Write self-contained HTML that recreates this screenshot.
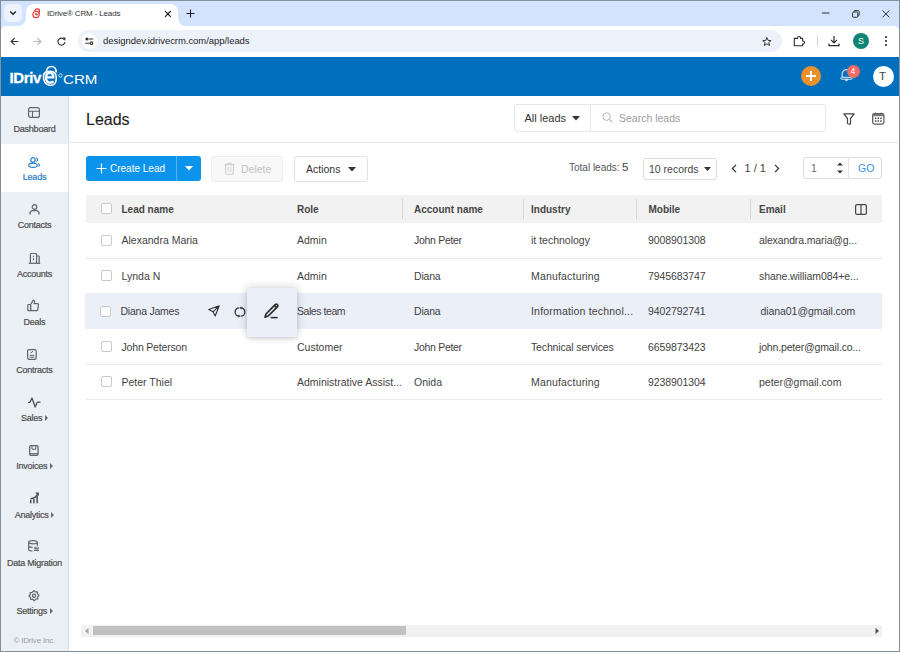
<!DOCTYPE html>
<html><head><meta charset="utf-8">
<style>
*{box-sizing:border-box;margin:0;padding:0}
html,body{width:900px;height:652px;overflow:hidden;background:#fff;font-family:"Liberation Sans",sans-serif;position:relative}
.a{position:absolute}
.t{position:absolute;white-space:nowrap;line-height:1}
svg{position:absolute;overflow:visible}
#frame{position:absolute;left:0;top:0;width:900px;height:652px;border:1px solid #80919c;z-index:50;pointer-events:none}
/* chrome */
#tabstrip{left:1px;top:1px;width:898px;height:30px;background:#d3e3fd}
#tabdd{left:4px;top:4px;width:18px;height:18px;border-radius:5px;background:#edf2fd}
#tab{left:26px;top:4px;width:152px;height:24px;background:#fff;border-radius:8px 8px 0 0}
#toolbar{left:1px;top:26px;width:898px;height:31px;background:#fff;border-radius:5px 5px 0 0}
#omni{left:78px;top:30px;width:704px;height:22px;border-radius:11px;background:#edf2fa}
#appbar{left:1px;top:57px;width:898px;height:39px;background:#0070be}
#side{left:1px;top:96px;width:68px;height:555px;background:#ebf0f5;border-right:1px solid #dbe2ea}
.si{position:absolute;left:0;width:67px;height:48px;color:#4d4d4d}
.si .lb{position:absolute;left:0;width:67px;text-align:center;top:29px;font-size:9px;letter-spacing:-0.25px;white-space:nowrap;line-height:1;-webkit-text-stroke:0.2px currentColor}
.car{display:inline-block;width:0;height:0;border-left:3px solid #6a6a6a;border-top:3px solid transparent;border-bottom:3px solid transparent;margin-left:2.5px;vertical-align:0px}
.tb{font-size:10.5px;color:#3f3f3f}
.th{font-size:10px;color:#454545;font-weight:bold}
.cb{position:absolute;width:11px;height:11px;border:1px solid #c9c9c9;border-radius:2px;background:#fff}
.rowline{position:absolute;left:86px;width:796px;height:1px;background:#e9e9e9}
.vd{position:absolute;top:199px;width:1px;height:20px;background:#d6d6d6}
</style></head><body>
<div id="frame"></div>
<!-- ============ BROWSER CHROME ============ -->
<div class="a" id="tabstrip"></div>
<div class="a" id="tabdd"></div>
<svg style="left:9px;top:10px" width="8" height="6" viewBox="0 0 8 6"><path d="M1.2 1.5 L4 4.2 L6.8 1.5" fill="none" stroke="#1f1f1f" stroke-width="1.4"/></svg>
<div class="a" id="tab"></div>
<!-- tab outward curve -->
<svg style="left:178px;top:18px" width="8" height="8" viewBox="0 0 8 8"><path d="M0 0 L0 8 L8 8 A8 8 0 0 1 0 0Z" fill="#fff"/></svg>
<svg style="left:18px;top:18px" width="8" height="8" viewBox="0 0 8 8"><path d="M8 0 L8 8 L0 8 A8 8 0 0 0 8 0Z" fill="#fff"/></svg>
<!-- favicon -->
<svg style="left:32px;top:7.5px;transform:rotate(18deg)" width="9" height="10" viewBox="0 0 9 10"><path d="M2.3 4.2 V3 A2.3 2.3 0 0 1 6.9 3 V3.6" fill="none" stroke="#e53935" stroke-width="1.2"/><circle cx="4.5" cy="6.5" r="3.2" fill="none" stroke="#e53935" stroke-width="1.2"/><path d="M3.2 6.5 H5.8 M3.4 6.5 A1.2 1.2 0 1 1 5.6 7.4" fill="none" stroke="#e53935" stroke-width="0.9"/></svg>
<div class="t" style="left:47px;top:10px;font-size:8px;color:#333;letter-spacing:-0.15px">IDrive® CRM - Leads</div>
<svg style="left:163.5px;top:9.5px" width="8" height="8" viewBox="0 0 8 8"><path d="M1 1 L6.8 6.8 M6.8 1 L1 6.8" stroke="#1f1f1f" stroke-width="1.15"/></svg>
<svg style="left:185.5px;top:8.5px" width="10" height="10" viewBox="0 0 10 10"><path d="M4.5 0.5 V8.5 M0.5 4.5 H8.5" stroke="#1f1f1f" stroke-width="1.1"/></svg>
<!-- window controls -->
<svg style="left:822px;top:12px" width="8" height="2" viewBox="0 0 8 2"><path d="M0 1 H7.5" stroke="#333" stroke-width="1"/></svg>
<svg style="left:852px;top:9.5px" width="8" height="8" viewBox="0 0 8 8"><rect x="0.5" y="2" width="5.3" height="5.3" rx="1.2" fill="none" stroke="#333" stroke-width="1"/><path d="M2 2 V1.6 A1 1 0 0 1 3 0.6 H6.2 A1 1 0 0 1 7.2 1.6 V4.8 A1 1 0 0 1 6.2 5.8 H5.8" fill="none" stroke="#333" stroke-width="1"/></svg>
<svg style="left:882px;top:9.5px" width="8" height="8" viewBox="0 0 8 8"><path d="M0.5 0.5 L7.3 7.3 M7.3 0.5 L0.5 7.3" stroke="#333" stroke-width="1"/></svg>

<div class="a" id="toolbar"></div>
<!-- back / fwd / reload -->
<svg style="left:10px;top:37px" width="9" height="9" viewBox="0 0 9 9"><path d="M8.3 4.5 H1.4 M4.6 1.2 L1.2 4.5 L4.6 7.8" fill="none" stroke="#333" stroke-width="1.15"/></svg>
<svg style="left:33px;top:37px" width="9" height="9" viewBox="0 0 9 9"><path d="M0.7 4.5 H7.6 M4.4 1.2 L7.8 4.5 L4.4 7.8" fill="none" stroke="#b4b4b4" stroke-width="1.15"/></svg>
<svg style="left:57px;top:37px" width="9" height="9" viewBox="0 0 9 9"><path d="M7.6 3.2 A3.5 3.5 0 1 0 7.9 5.2" fill="none" stroke="#333" stroke-width="1.15"/><path d="M5.4 0.6 L8.4 0.6 L8.4 3.6Z" fill="#2b2b2b"/></svg>
<div class="a" id="omni"></div>
<div class="a" style="left:81.5px;top:33px;width:15.5px;height:15.5px;border-radius:8px;background:#fff"></div>
<svg style="left:85px;top:37px" width="9" height="9" viewBox="0 0 9 9"><circle cx="1.9" cy="2" r="1.5" fill="#333"/><path d="M3.6 2 H8.2 M0.3 6.2 H4.6" stroke="#333" stroke-width="1.1"/><circle cx="6.5" cy="6.2" r="1.3" fill="none" stroke="#333" stroke-width="1.1"/></svg>
<div class="t" style="left:103px;top:36px;font-size:9.5px;color:#1f1f1f;letter-spacing:-0.05px">designdev.idrivecrm.com/app/leads</div>
<!-- star -->
<svg style="left:761px;top:35.5px;transform:scale(0.85);transform-origin:5.5px 5px" width="12" height="12" viewBox="0 0 12 12"><path d="M6 1 L7.4 4.3 L10.9 4.5 L8.2 6.8 L9.1 10.3 L6 8.4 L2.9 10.3 L3.8 6.8 L1.1 4.5 L4.6 4.3Z" fill="none" stroke="#2b2b2b" stroke-width="1.1" stroke-linejoin="round"/></svg>
<!-- extensions -->
<svg style="left:793px;top:35px" width="12" height="12" viewBox="0 0 12 12"><path d="M1.3 3.4 H4.6 V3 A1.5 1.5 0 0 1 7.6 3 V3.4 H9.6 V6 H10 A1.5 1.5 0 0 1 10 9 H9.6 V10.8 H1.3 Z" fill="none" stroke="#2b2b2b" stroke-width="1.1" stroke-linejoin="round"/></svg>
<div class="a" style="left:817px;top:36px;width:1px;height:10px;background:#c7d3e8"></div>
<svg style="left:828px;top:35px" width="12" height="12" viewBox="0 0 12 12"><path d="M6 1 V7.6 M3 4.8 L6 7.8 L9 4.8" fill="none" stroke="#2b2b2b" stroke-width="1.2"/><path d="M1 8.5 V10.6 H11 V8.5" fill="none" stroke="#2b2b2b" stroke-width="1.2"/></svg>
<div class="a" style="left:853px;top:33px;width:16px;height:16px;border-radius:8px;background:#0f8672"></div>
<div class="t" style="left:858px;top:37px;font-size:9px;color:#fff">S</div>
<svg style="left:884px;top:35px" width="4" height="12" viewBox="0 0 4 12"><circle cx="2" cy="2" r="1.1" fill="#2b2b2b"/><circle cx="2" cy="6" r="1.1" fill="#2b2b2b"/><circle cx="2" cy="10" r="1.1" fill="#2b2b2b"/></svg>

<!-- ============ APP BAR ============ -->
<div class="a" id="appbar"></div>
<div class="t" style="left:9.5px;top:70px;font-size:15px;font-weight:bold;color:#fff;letter-spacing:-0.4px;-webkit-text-stroke:0.3px #fff">IDriv</div>
<svg style="left:42px;top:65px" width="16" height="22" viewBox="0 0 16 22"><path d="M1.6 10 C0.9 15.5, 3 20.3, 8.5 20.3 C13 20.3, 14.4 17, 14.3 12.5 C14.2 8, 12 6.4, 8 6.4 C4.5 6.4, 2.3 7.8, 1.6 10Z" fill="none" stroke="#fff" stroke-width="1.6"/><path d="M4.2 7.2 C4.6 3.2, 6.8 1.5, 9.5 1.5 C12.5 1.5, 14.2 3.8, 14.2 7.6" fill="none" stroke="#fff" stroke-width="1.7"/><path d="M4.4 12.3 H11.3 C11.3 9.2, 9.8 7.8, 7.8 7.8 C5.6 7.8, 4 9.7, 4 12.7 C4 15.9, 5.7 17.6, 8.1 17.6 C9.5 17.6, 10.6 17.1, 11.3 16.2" fill="none" stroke="#fff" stroke-width="2.3"/></svg>
<svg style="left:57.5px;top:72.5px" width="5" height="5" viewBox="0 0 5 5"><circle cx="2.5" cy="2.5" r="1.7" fill="none" stroke="#cfe0f2" stroke-width="1"/></svg>
<div class="t" style="left:63px;top:72.5px;font-size:13px;color:#fff;transform:scaleX(1.16);transform-origin:0 0">CRM</div>
<!-- orange plus -->
<div class="a" style="left:801px;top:66px;width:20px;height:20px;border-radius:10px;background:#e8912d"></div>
<div class="a" style="left:806px;top:75px;width:10px;height:2px;background:#fff"></div>
<div class="a" style="left:810px;top:71px;width:2px;height:10px;background:#fff"></div>
<!-- bell -->
<svg style="left:840px;top:68px" width="14" height="14" viewBox="0 0 14 14"><path d="M2.2 9.5 V5.8 A4.2 4.2 0 0 1 10.6 5.8 V9.5" fill="none" stroke="#d6e6f5" stroke-width="1.1"/><rect x="0.8" y="9.3" width="11.4" height="1.9" rx="0.9" fill="none" stroke="#d6e6f5" stroke-width="1"/><path d="M5.2 11.4 A1.3 1.3 0 0 0 7.8 11.4Z" fill="#d6e6f5" stroke="#d6e6f5" stroke-width="0.8"/></svg>
<div class="a" style="left:846.5px;top:65px;width:13px;height:13px;border-radius:7px;background:#f36b60"></div>
<div class="t" style="left:850.5px;top:67px;font-size:8.5px;color:#fff">4</div>
<div class="a" style="left:872.5px;top:65.5px;width:21px;height:21px;border-radius:11px;background:#fff"></div>
<div class="t" style="left:879px;top:71px;font-size:11.5px;color:#444">T</div>

<!-- ============ SIDEBAR ============ -->
<div class="a" id="side">
  <div class="si" style="top:0.0px">
    <svg style="left:27px;top:11px" width="12" height="11" viewBox="0 0 12 11"><rect x="0.6" y="0.6" width="10.8" height="9.8" rx="2" fill="none" stroke="#5b666f" stroke-width="1.2"/><path d="M0.6 4.3 H11.4 M4.5 4.3 V10.4" stroke="#5b666f" stroke-width="1.1"/></svg>
    <div class="lb">Dashboard</div>
  </div>
  <div class="si" style="top:48.2px;background:#fff;color:#2a80c6">
    <svg style="left:27px;top:13px" width="13" height="11" viewBox="0 0 13 11"><circle cx="5" cy="2.9" r="2.2" fill="none" stroke="#2a80c6" stroke-width="1.2"/><ellipse cx="5" cy="8.2" rx="4.3" ry="2.1" fill="none" stroke="#2a80c6" stroke-width="1.2"/><path d="M7.9 0.8 A2 2 0 0 1 8.4 4.6 M10.3 6.6 A1.8 1.8 0 0 1 10.6 9.6" fill="none" stroke="#2a80c6" stroke-width="1.1"/></svg>
    <div class="lb">Leads</div>
  </div>
  <div class="si" style="top:96.4px">
    <svg style="left:28px;top:12px" width="11" height="11" viewBox="0 0 11 11"><circle cx="5.5" cy="3" r="2.3" fill="none" stroke="#5b666f" stroke-width="1.2"/><path d="M1 10.5 V9.2 A2.6 2.6 0 0 1 3.6 6.6 H7.4 A2.6 2.6 0 0 1 10 9.2 V10.5" fill="none" stroke="#5b666f" stroke-width="1.3"/></svg>
    <div class="lb">Contacts</div>
  </div>
  <div class="si" style="top:144.6px">
    <svg style="left:27px;top:12.5px" width="13" height="11" viewBox="0 0 13 11"><path d="M2.4 10.2 V1.5 A1 1 0 0 1 3.4 0.5 H7.6 A1 1 0 0 1 8.6 1.5 V10.2 M8.6 3 H10.4 A0.8 0.8 0 0 1 11.2 3.8 V10.2" fill="none" stroke="#5b666f" stroke-width="1.2"/><path d="M0.8 10.3 H12.2" stroke="#5b666f" stroke-width="1.2"/><path d="M5.4 2.8 V4.2 M5.4 5.2 V7.4" stroke="#5b666f" stroke-width="1"/></svg>
    <div class="lb">Accounts</div>
  </div>
  <div class="si" style="top:192.8px">
    <svg style="left:26px;top:11.5px" width="13" height="12" viewBox="0 0 13 12"><path d="M3.6 4.5 L6 0.6 A1 1 0 0 1 7.6 1.4 L7.1 3.6 H10.5 A1 1 0 0 1 11.5 4.7 L10.8 9.6 A1 1 0 0 1 9.8 10.6 H3.6Z" fill="none" stroke="#5b666f" stroke-width="1.2" stroke-linejoin="round"/><rect x="0.8" y="4.5" width="2.8" height="6.1" rx="0.6" fill="none" stroke="#5b666f" stroke-width="1.2"/></svg>
    <div class="lb">Deals</div>
  </div>
  <div class="si" style="top:241.0px">
    <svg style="left:26px;top:12px" width="10" height="11" viewBox="0 0 10 11"><rect x="0.6" y="0.6" width="8.6" height="9.8" rx="1.6" fill="none" stroke="#5b666f" stroke-width="1.2"/><path d="M3.5 4.2 L6 2.2 M2.7 6.4 H7.2 M2.7 8.2 H7.2" stroke="#5b666f" stroke-width="1"/></svg>
    <div class="lb">Contracts</div>
  </div>
  <div class="si" style="top:289.2px">
    <svg style="left:27px;top:12px" width="13" height="11" viewBox="0 0 13 11"><path d="M0.6 5.3 H2 L4 1 L7.2 10 L9.2 5.2 H12" fill="none" stroke="#454f57" stroke-width="1.3" stroke-linejoin="round" stroke-linecap="round"/></svg>
    <div class="lb">Sales<span class="car"></span></div>
  </div>
  <div class="si" style="top:337.4px">
    <svg style="left:28px;top:12px" width="10" height="11" viewBox="0 0 10 11"><rect x="0.7" y="0.7" width="8.4" height="9.6" rx="1.4" fill="none" stroke="#5b666f" stroke-width="1.3"/><path d="M3 1 V4.3 H6.8 V1" fill="none" stroke="#5b666f" stroke-width="1"/><path d="M0.7 8.8 H9.1" stroke="#5b666f" stroke-width="1.3"/></svg>
    <div class="lb">Invoices<span class="car"></span></div>
  </div>
  <div class="si" style="top:385.6px">
    <svg style="left:28px;top:10px" width="11" height="12" viewBox="0 0 11 12"><path d="M1.5 6.8 A9 9 0 0 0 9 1.6" fill="none" stroke="#454f57" stroke-width="1.5"/><path d="M6.2 0.4 L10 0.6 L9.6 4.3Z" fill="#454f57"/><path d="M1.7 8.6 V10.8 M4.9 7.4 V10.8 M8.1 4.6 V10.8" stroke="#454f57" stroke-width="1.5" stroke-linecap="round"/></svg>
    <div class="lb">Analytics<span class="car"></span></div>
  </div>
  <div class="si" style="top:433.8px">
    <svg style="left:27px;top:10.5px" width="12" height="12" viewBox="0 0 12 12"><ellipse cx="5" cy="2.2" rx="4.3" ry="1.6" fill="none" stroke="#5b666f" stroke-width="1.2"/><path d="M0.7 2.2 V9.4 A4.3 1.6 0 0 0 4.6 11 M0.7 5.8 A4.3 1.6 0 0 0 4.6 7.4 M9.3 2.2 V6.2" fill="none" stroke="#5b666f" stroke-width="1.2"/><path d="M6.4 8.1 H11 M10.6 10.3 H6" fill="none" stroke="#5b666f" stroke-width="1.3"/><path d="M7.6 6.6 L5.9 8.1 L7.6 9.6Z M9.4 8.8 L11.1 10.3 L9.4 11.8Z" fill="#5b666f"/></svg>
    <div class="lb">Data Migration</div>
  </div>
  <div class="si" style="top:482.0px">
    <svg style="left:27px;top:12px" width="12" height="12" viewBox="0 0 12 12"><path d="M6 0.6 L7.3 2 L9.3 1.9 L9.5 3.9 L11 5.4 L9.7 6.9 L9.8 8.9 L7.8 9.2 L6.3 10.8 L4.8 9.4 L2.8 9.5 L2.5 7.5 L1 6 L2.3 4.6 L2.2 2.6 L4.2 2.3Z" fill="none" stroke="#5b666f" stroke-width="1.2" stroke-linejoin="round"/><circle cx="6" cy="5.8" r="1.6" fill="none" stroke="#5b666f" stroke-width="1.2"/></svg>
    <div class="lb">Settings<span class="car"></span></div>
  </div>
  <div class="t" style="left:12.5px;top:540.5px;font-size:8px;letter-spacing:-0.2px;color:#9a9a9a">© IDrive Inc.</div>
</div>

<!-- ============ PAGE HEADER ============ -->
<div class="t" style="left:86px;top:111.5px;font-size:16px;color:#1e1e1e;-webkit-text-stroke:0.1px #1e1e1e">Leads</div>
<div class="a" style="left:69px;top:142px;width:830px;height:1px;background:#e3e9ef"></div>
<div class="a" style="left:514px;top:104px;width:312px;height:28px;border:1px solid #e6e6e6;border-radius:3px;background:#fff"></div>
<div class="a" style="left:590px;top:105px;width:1px;height:26px;background:#e6e6e6"></div>
<div class="t tb" style="left:524.5px;top:112.5px;font-size:11px;color:#333">All leads</div>
<svg style="left:572px;top:116px" width="8" height="5" viewBox="0 0 8 5"><path d="M0 0 H8 L4 4.5Z" fill="#333"/></svg>
<svg style="left:602px;top:112px" width="11" height="11" viewBox="0 0 11 11"><circle cx="4.6" cy="4.6" r="3.8" fill="none" stroke="#b5b5b5" stroke-width="1"/><path d="M7.4 7.4 L10.2 10.2" stroke="#b5b5b5" stroke-width="1.1"/></svg>
<div class="t" style="left:619px;top:112.5px;font-size:10.5px;color:#9b9b9b">Search leads</div>
<!-- filter -->
<svg style="left:842.5px;top:112.5px" width="12" height="12" viewBox="0 0 12 12"><path d="M0.8 0.9 H11.2 L7.5 5.5 V10.3 Q7.5 11.3 6.6 11.2 L5.1 11 Q4.5 10.9 4.5 10.1 V5.5Z" fill="none" stroke="#444" stroke-width="1.2" stroke-linejoin="round"/></svg>
<!-- calendar -->
<svg style="left:872px;top:112px" width="13" height="13" viewBox="0 0 13 13"><rect x="0.7" y="1.5" width="11.2" height="10.6" rx="1.8" fill="none" stroke="#555" stroke-width="1.2"/><rect x="1" y="1.8" width="10.6" height="2.4" fill="#777"/><path d="M3.4 0.6 V2 M9.2 0.6 V2" stroke="#555" stroke-width="1"/><g fill="#444"><rect x="2.9" y="5.6" width="1.5" height="1.5"/><rect x="5.55" y="5.6" width="1.5" height="1.5"/><rect x="8.2" y="5.6" width="1.5" height="1.5"/><rect x="2.9" y="8.3" width="1.5" height="1.5"/><rect x="5.55" y="8.3" width="1.5" height="1.5"/><rect x="8.2" y="8.3" width="1.5" height="1.5"/></g></svg>
<!-- filter2 -->
<!-- ============ TOOLBAR ============ -->
<div class="a" style="left:86px;top:156px;width:115px;height:25px;border-radius:3px;background:#0c93ec"></div>
<div class="a" style="left:176px;top:156px;width:1px;height:25px;background:#5fb0f2"></div>
<svg style="left:96px;top:163px" width="11" height="11" viewBox="0 0 11 11"><path d="M5.5 0.5 V10.5 M0.5 5.5 H10.5" stroke="#fff" stroke-width="1.2"/></svg>
<div class="t" style="left:110px;top:164px;font-size:10px;color:#fff">Create Lead</div>
<svg style="left:185px;top:166px" width="8" height="5" viewBox="0 0 8 5"><path d="M0 0 H8 L4 4.5Z" fill="#fff"/></svg>

<div class="a" style="left:211px;top:156px;width:72px;height:26px;border:1px solid #efefef;border-radius:3px;background:#f8f8f8"></div>
<svg style="left:224px;top:162px" width="11" height="13" viewBox="0 0 11 13"><path d="M0.5 2.6 H10.5 M3.8 2.4 V1.2 H7.2 V2.4" fill="none" stroke="#cfcfcf" stroke-width="1.1"/><path d="M1.7 2.8 V11.3 A1 1 0 0 0 2.7 12.3 H8.3 A1 1 0 0 0 9.3 11.3 V2.8" fill="none" stroke="#cfcfcf" stroke-width="1.1"/><path d="M4.2 5 V10 M6.8 5 V10" stroke="#cfcfcf" stroke-width="1"/></svg>
<div class="t" style="left:241px;top:164px;font-size:10.5px;color:#c4c4c4">Delete</div>

<div class="a" style="left:294px;top:156px;width:74px;height:26px;border:1px solid #e2e2e2;border-radius:3px;background:#fff"></div>
<div class="t" style="left:306px;top:164px;font-size:10.5px;color:#333">Actions</div>
<svg style="left:348px;top:167px" width="8" height="5" viewBox="0 0 8 5"><path d="M0 0 H8 L4 4.5Z" fill="#333"/></svg>

<div class="t" style="left:569px;top:162.5px;font-size:10px;color:#555">Total leads:</div>
<div class="t" style="left:622px;top:161.5px;font-size:11.5px;color:#444">5</div>
<div class="a" style="left:643px;top:158px;width:74px;height:22px;border:1px solid #dcdcdc;border-radius:3px;background:#fff"></div>
<div class="t" style="left:649px;top:164px;font-size:10.5px;color:#444">10 records</div>
<svg style="left:704px;top:167px" width="7" height="4" viewBox="0 0 7 4"><path d="M0 0 H7 L3.5 4Z" fill="#333"/></svg>
<svg style="left:731px;top:164px" width="6" height="9" viewBox="0 0 6 9"><path d="M5 0.8 L1.4 4.5 L5 8.2" fill="none" stroke="#333" stroke-width="1.2"/></svg>
<div class="t" style="left:744.5px;top:163px;font-size:11px;color:#444">1 / 1</div>
<svg style="left:774px;top:164px" width="6" height="9" viewBox="0 0 6 9"><path d="M1 0.8 L4.6 4.5 L1 8.2" fill="none" stroke="#333" stroke-width="1.2"/></svg>
<div class="a" style="left:803px;top:157px;width:79px;height:22px;border:1px solid #dcdcdc;border-radius:3px;background:#fff"></div>
<div class="a" style="left:848px;top:158px;width:1px;height:20px;background:#e3e3e3"></div>
<div class="t" style="left:811px;top:163px;font-size:10.5px;color:#6a6a6a">1</div>
<svg style="left:836px;top:161px" width="8" height="14" viewBox="0 0 8 14"><path d="M1 4.6 L4 1.4 L7 4.6Z M1 9.4 L4 12.6 L7 9.4Z" fill="#333"/></svg>
<div class="t" style="left:858px;top:163px;font-size:10.5px;color:#3d8fe0">GO</div>

<!-- ============ TABLE ============ -->
<div class="a" style="left:86px;top:195px;width:796px;height:28px;background:#f2f2f2"></div>
<div class="cb" style="left:101px;top:203px"></div>
<div class="t th" style="left:121.5px;top:205px">Lead name</div>
<div class="t th" style="left:297px;top:205px">Role</div>
<div class="vd" style="left:402px"></div>
<div class="t th" style="left:414px;top:205px">Account name</div>
<div class="vd" style="left:523px"></div>
<div class="t th" style="left:531px;top:205px">Industry</div>
<div class="vd" style="left:636px"></div>
<div class="t th" style="left:648.5px;top:205px">Mobile</div>
<div class="vd" style="left:750px"></div>
<div class="t th" style="left:759px;top:205px">Email</div>
<svg style="left:855px;top:204px" width="12" height="11" viewBox="0 0 12 11"><rect x="0.6" y="0.6" width="10.8" height="9.8" rx="1.5" fill="none" stroke="#444" stroke-width="1.2"/><path d="M6 0.6 V10.4" stroke="#444" stroke-width="1.2"/></svg>

<!-- rows -->
<div class="rowline" style="top:258px"></div>
<div class="a" style="left:85px;top:293px;width:797px;height:36px;background:#eaeff8"></div>
<div class="rowline" style="top:364px"></div>
<div class="rowline" style="top:399px"></div>

<div class="cb" style="left:101px;top:235px"></div>
<div class="t tb" style="left:121.5px;top:235px">Alexandra Maria</div>
<div class="t tb" style="left:297px;top:235px">Admin</div>
<div class="t tb" style="left:414px;top:235px;letter-spacing:-0.3px">John Peter</div>
<div class="t tb" style="left:531px;top:235px">it technology</div>
<div class="t tb" style="left:648px;top:235px;letter-spacing:-0.1px">9008901308</div>
<div class="t tb" style="left:759px;top:235px;letter-spacing:-0.13px">alexandra.maria@g...</div>

<div class="cb" style="left:101px;top:270px"></div>
<div class="t tb" style="left:121.5px;top:271px">Lynda N</div>
<div class="t tb" style="left:297px;top:271px">Admin</div>
<div class="t tb" style="left:414px;top:271px;letter-spacing:-0.2px">Diana</div>
<div class="t tb" style="left:531px;top:271px;letter-spacing:0.18px">Manufacturing</div>
<div class="t tb" style="left:648px;top:271px;letter-spacing:-0.1px">7945683747</div>
<div class="t tb" style="left:759px;top:271px;letter-spacing:-0.08px">shane.william084+e...</div>

<div class="cb" style="left:100px;top:306px"></div>
<div class="t tb" style="left:120.5px;top:306px;letter-spacing:-0.24px">Diana James</div>
<svg style="left:207.5px;top:305px" width="12" height="12" viewBox="0 0 12 12"><path d="M11.2 0.8 L0.8 4.6 L5 6.8 L7.2 11 Z M11.2 0.8 L5 6.8" fill="none" stroke="#333" stroke-width="1.1" stroke-linejoin="round"/></svg>
<svg style="left:235px;top:306.5px" width="10" height="10" viewBox="0 0 10 10"><path d="M4.3 0.8 A4.2 4.2 0 0 0 4.3 9.2 M5.7 9.2 A4.2 4.2 0 0 0 5.7 0.8" fill="none" stroke="#333" stroke-width="1.3"/><path d="M3.6 7.6 L5.4 9.3 L3.4 10.4Z M6.4 2.4 L4.6 0.7 L6.6 -0.4Z" fill="#333"/></svg>
<div class="a" style="left:247px;top:288px;width:50px;height:49px;background:#eaeff8;box-shadow:0 0 9px rgba(0,0,0,0.2),0 1px 3px rgba(0,0,0,0.1)"></div>
<svg style="left:263px;top:303px" width="17" height="17" viewBox="0 0 17 17"><path d="M12.2 1.6 A1.4 1.4 0 0 1 14.4 3.8 L5.2 13 L2 14.2 L3 11 Z" fill="none" stroke="#2b2b2b" stroke-width="1.7" stroke-linejoin="round"/><path d="M12 1.8 L14.2 4 L13 5.2 L10.8 3Z" fill="#2b2b2b"/><path d="M7.6 14.6 H14.6" stroke="#2b2b2b" stroke-width="1.5"/></svg>
<div class="t tb" style="left:297px;top:306px;letter-spacing:-0.44px">Sales team</div>
<div class="t tb" style="left:414px;top:306px;letter-spacing:-0.2px">Diana</div>
<div class="t tb" style="left:531px;top:306px;letter-spacing:0.19px">Information technol...</div>
<div class="t tb" style="left:648px;top:306px;letter-spacing:-0.1px">9402792741</div>
<div class="t tb" style="left:760.5px;top:306px;letter-spacing:-0.07px">diana01@gmail.com</div>

<div class="cb" style="left:101px;top:341px"></div>
<div class="t tb" style="left:121.5px;top:342px;letter-spacing:-0.18px">John Peterson</div>
<div class="t tb" style="left:297px;top:342px">Customer</div>
<div class="t tb" style="left:414px;top:342px;letter-spacing:-0.3px">John Peter</div>
<div class="t tb" style="left:531px;top:342px;letter-spacing:-0.14px">Technical services</div>
<div class="t tb" style="left:648px;top:342px;letter-spacing:-0.1px">6659873423</div>
<div class="t tb" style="left:759px;top:342px;letter-spacing:-0.16px">john.peter@gmail.co...</div>

<div class="cb" style="left:101px;top:376px"></div>
<div class="t tb" style="left:121.5px;top:377px">Peter Thiel</div>
<div class="t tb" style="left:297px;top:377px">Administrative Assist...</div>
<div class="t tb" style="left:414px;top:377px">Onida</div>
<div class="t tb" style="left:531px;top:377px;letter-spacing:0.18px">Manufacturing</div>
<div class="t tb" style="left:648px;top:377px;letter-spacing:-0.1px">9238901304</div>
<div class="t tb" style="left:759px;top:377px">peter@gmail.com</div>

<!-- ============ SCROLLBAR ============ -->
<div class="a" style="left:81px;top:625px;width:801px;height:12px;background:#f1f1f1"></div>
<div class="a" style="left:93px;top:626px;width:313px;height:9px;background:#c1c1c1"></div>
<svg style="left:85px;top:628px" width="4" height="6" viewBox="0 0 4 6"><path d="M3.5 0 V6 L0 3Z" fill="#a3a3a3"/></svg>
<svg style="left:875px;top:628px" width="4" height="6" viewBox="0 0 4 6"><path d="M0.5 0 V6 L4 3Z" fill="#505050"/></svg>
</body></html>
